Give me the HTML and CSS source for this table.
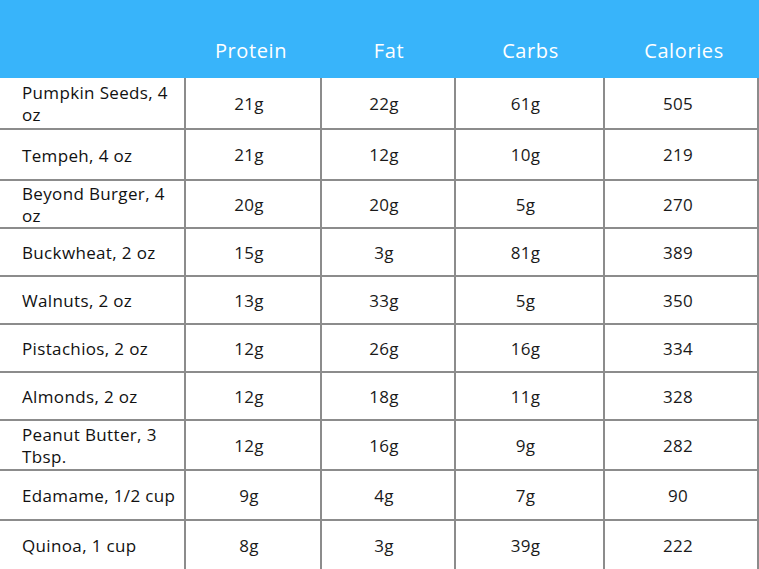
FILE: index.html
```html
<!DOCTYPE html>
<html lang="en">
<head>
<meta charset="utf-8">
<title>Protein sources</title>
<link rel="stylesheet" href="styles.css">
</head>
<body>
<table class="nutri">
  <colgroup>
    <col class="c-name"><col class="c-pro"><col class="c-fat"><col class="c-carb"><col class="c-cal">
  </colgroup>
  <thead>
    <tr>
      <th></th><th>Protein</th><th>Fat</th><th>Carbs</th><th>Calories</th>
    </tr>
  </thead>
  <tbody>
    <tr><td class="name">Pumpkin Seeds, 4 oz</td><td>21g</td><td>22g</td><td>61g</td><td>505</td></tr>
    <tr><td class="name">Tempeh, 4 oz</td><td>21g</td><td>12g</td><td>10g</td><td>219</td></tr>
    <tr><td class="name">Beyond Burger, 4 oz</td><td>20g</td><td>20g</td><td>5g</td><td>270</td></tr>
    <tr><td class="name">Buckwheat, 2 oz</td><td>15g</td><td>3g</td><td>81g</td><td>389</td></tr>
    <tr><td class="name">Walnuts, 2 oz</td><td>13g</td><td>33g</td><td>5g</td><td>350</td></tr>
    <tr><td class="name">Pistachios, 2 oz</td><td>12g</td><td>26g</td><td>16g</td><td>334</td></tr>
    <tr><td class="name">Almonds, 2 oz</td><td>12g</td><td>18g</td><td>11g</td><td>328</td></tr>
    <tr><td class="name">Peanut Butter, 3 Tbsp.</td><td>12g</td><td>16g</td><td>9g</td><td>282</td></tr>
    <tr><td class="name">Edamame, 1/2 cup</td><td>9g</td><td>4g</td><td>7g</td><td>90</td></tr>
    <tr><td class="name">Quinoa, 1 cup</td><td>8g</td><td>3g</td><td>39g</td><td>222</td></tr>
  </tbody>
</table>
</body>
</html>
```
FILE: styles.css
```css
html, body {
  margin: 0;
  padding: 0;
  background: #ffffff;
}

body {
  font-family: "Open Sans", "Noto Sans", "DejaVu Sans", sans-serif;
  color: #151515;
}

.nutri {
  border-collapse: separate;
  border-spacing: 0;
  table-layout: fixed;
  width: 759px;
}

.c-name { width: 186px; }
.c-pro { width: 136px; }
.c-fat { width: 134px; }
.c-carb { width: 149px; }
.c-cal { width: 154px; }

.nutri thead th {
  background: #38b4fa;
  color: #ffffff;
  font-size: 20px;
  font-weight: 500;
  letter-spacing: 0.6px;
  height: 78px;
  padding: 22px 0 0 0;
  box-sizing: border-box;
  text-align: center;
  vertical-align: middle;
}

.nutri thead th:nth-child(2) {
  padding-right: 6px;
}

.nutri thead th:last-child {
  padding-left: 4px;
}

.nutri tbody td {
  height: 49px;
  box-sizing: border-box;
  border-right: 2px solid #8c8c8c;
  border-bottom: 2px solid #8c8c8c;
  font-size: 17px;
  font-weight: 400;
  letter-spacing: 0.2px;
  text-align: center;
  vertical-align: middle;
  padding: 1px 8px 0 0;
  line-height: 22px;
  color: #1a1a1a;
}

.nutri tbody tr:nth-child(1) td { height: 52px; }
.nutri tbody tr:nth-child(2) td { height: 51px; }
.nutri tbody tr:nth-child(3) td { height: 47px; }
.nutri tbody tr:nth-child(4) td,
.nutri tbody tr:nth-child(5) td,
.nutri tbody tr:nth-child(6) td,
.nutri tbody tr:nth-child(7) td { height: 48px; }
.nutri tbody tr:nth-child(8) td,
.nutri tbody tr:nth-child(9) td,
.nutri tbody tr:nth-child(10) td { height: 50px; }

.nutri tbody td.name {
  text-align: left;
  padding: 2px 3px 0 22px;
  font-weight: 500;
  letter-spacing: 0.35px;
  color: #111111;
}

.nutri tbody td:last-child {
  padding-right: 6px;
}
```
